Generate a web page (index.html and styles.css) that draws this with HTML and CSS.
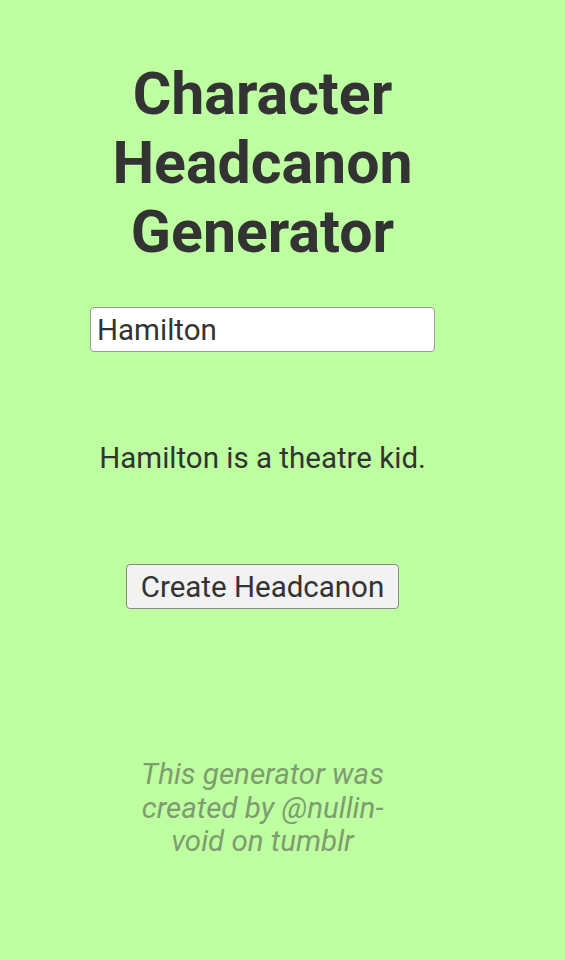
FILE: index.html
```html
<!DOCTYPE html>
<html lang="en">

<head>
    <meta charset="UTF-8">
    <meta name="viewport" content="width=device-width, initial-scale=1.0">
    <title>Character Headcanon Generator</title>
    <link rel="stylesheet" href="styles.css">
</head>

<body>
    <div class="page">
        <h1>Character Headcanon Generator</h1>
        <input type="text" id="charName" class="name-input" value="Hamilton">
        <p id="result" class="result">Hamilton is a theatre kid.</p>
        <button class="create-btn">Create Headcanon</button>
        <p class="credit">This generator was created by @nullin-void on tumblr</p>
    </div>
</body>

</html>
```

FILE: styles.css
```css
body {
    font-family: Roboto, 'Liberation Sans', sans-serif;
    font-size: 29.5px;
    margin: 0;
    padding: 0;
    background-color: #bdffa1;
    color: #333;
}

.page {
    width: 525px;
    min-height: 960px;
    padding-top: 59px;
    box-sizing: border-box;
    display: flex;
    flex-direction: column;
    align-items: center;
    text-align: center;
}

h1 {
    font-size: 2em;
    line-height: 69px;
    font-weight: bold;
    width: 320px;
    margin: 0 0 41px 0;
}

.name-input {
    width: 345px;
    height: 45px;
    box-sizing: border-box;
    font-family: inherit;
    font-size: 1em;
    color: #333;
    padding: 0 6px;
    border: 1px solid #999;
    border-radius: 4px;
    background-color: #fff;
}

.result {
    font-size: 1em;
    margin: 89px 0 0 0;
}

.create-btn {
    margin-top: 89px;
    width: 273px;
    height: 45px;
    font-family: inherit;
    font-size: 1em;
    color: #333;
    background-color: #f2f2f2;
    border: 1px solid #888;
    border-radius: 4px;
    padding: 0;
}

.credit {
    font-style: italic;
    font-size: 1em;
    line-height: 33.5px;
    color: #7d9d6f;
    width: 270px;
    margin: 149px 0 0 0;
}
```
